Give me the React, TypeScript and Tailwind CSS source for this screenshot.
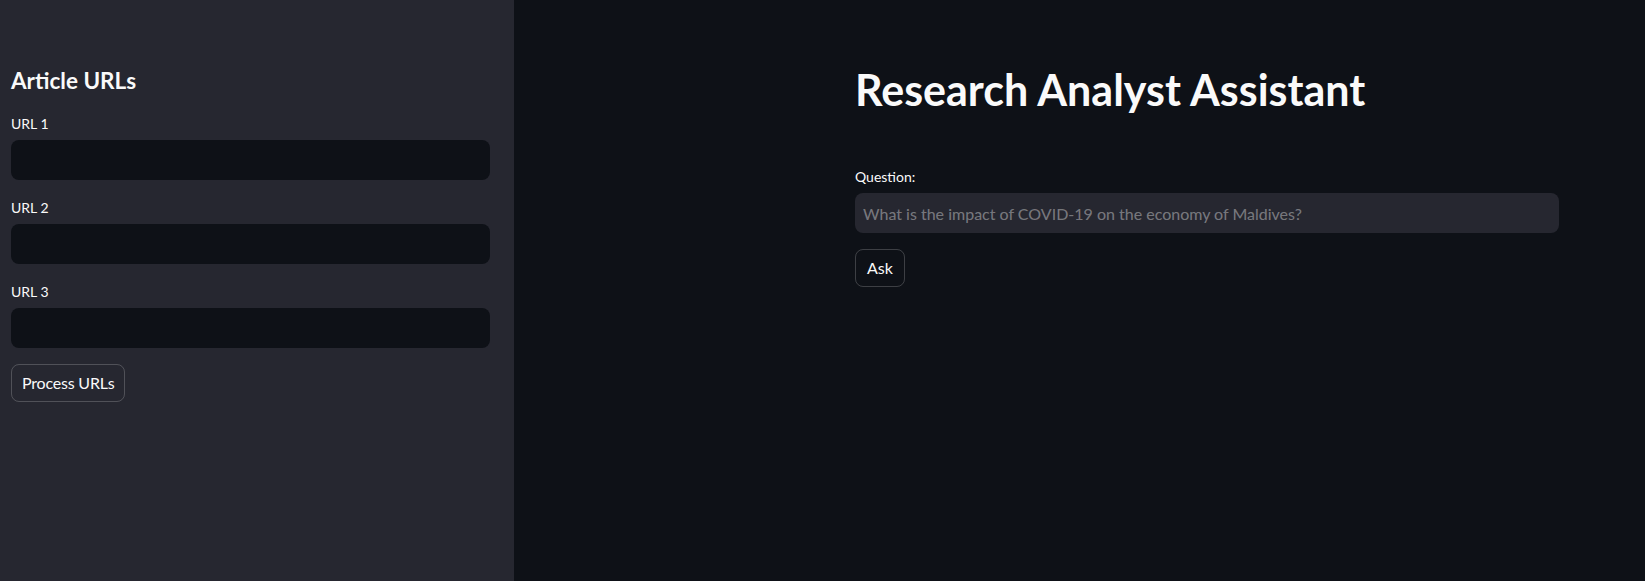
import { useState } from 'react';

const font = { fontFamily: 'Lato, "Noto Sans", sans-serif' };

function UrlField({ label }: { label: string }) {
  const [value, setValue] = useState('');
  return (
    <div className="flex flex-col">
      <label className="h-[24px] text-[14px] leading-[24px] text-[#fafafa]">{label}</label>
      <input
        value={value}
        onChange={(e) => setValue(e.target.value)}
        className="mt-[4px] h-[40px] w-full rounded-[8px] bg-[#0e1117] px-3 text-[16px] text-[#fafafa] outline-none"
      />
    </div>
  );
}

export default function App() {
  const [question, setQuestion] = useState('');

  return (
    <div className="flex h-[581px] w-full overflow-hidden bg-[#0e1117] text-[#fafafa]" style={font}>
      {/* Sidebar */}
      <div className="flex w-[514px] flex-shrink-0 flex-col bg-[#262730] pl-[11px] pr-[24px] pt-[65px]">
        <h2 className="mb-[15px] text-[22.5px] font-bold leading-[32px]">Article URLs</h2>
        <div className="flex flex-col gap-[16px]">
          <UrlField label="URL 1" />
          <UrlField label="URL 2" />
          <UrlField label="URL 3" />
          <div>
            <button className="h-[38px] rounded-[8px] border border-[#fafafa33] px-[10px] text-[16px] tracking-[-0.2px] text-[#fafafa]">
              Process URLs
            </button>
          </div>
        </div>
      </div>

      {/* Main */}
      <div className="flex flex-1 flex-col pl-[341px] pr-[86px] pt-[60px]">
        <h1 className="text-[43px] font-bold leading-[60px]">Research Analyst Assistant</h1>
        <div className="mt-[45px] flex flex-col">
          <label className="h-[24px] text-[14px] leading-[24px]">Question:</label>
          <input
            value={question}
            onChange={(e) => setQuestion(e.target.value)}
            placeholder="What is the impact of COVID-19 on the economy of Maldives?"
            className="mt-[4px] h-[40px] w-full rounded-[8px] bg-[#262730] px-[8px] text-[16px] text-[#fafafa] outline-none placeholder:text-[#fafafa66]"
          />
          <div className="mt-[16px]">
            <button className="h-[38px] rounded-[8px] border border-[#fafafa33] px-[11px] text-[16px]">Ask</button>
          </div>
        </div>
      </div>
    </div>
  );
}
